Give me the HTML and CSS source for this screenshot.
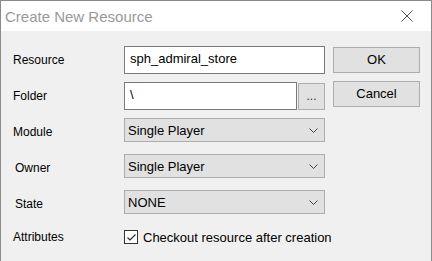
FILE: index.html
```html
<!doctype html>
<html lang="en">
<head>
    <meta charset="UTF-8">
    <title>Create New Resource</title>
    <link rel="stylesheet" href="styles.css">
</head>
<body>
<div class="window">
    <div class="titleBar">
        <span class="title">Create New Resource</span>
        <a href="javascript:;" class="closeBtn">
            <svg width="12" height="12" viewBox="0 0 12 12">
                <path d="M0.5 0.5 L11.5 11.5 M11.5 0.5 L0.5 11.5" stroke="#555" stroke-width="1" fill="none"/>
            </svg>
        </a>
    </div>
    <div class="content">
        <div class="form">
            <div class="row rowTall">
                <label>Resource</label>
                <div class="textBox">sph_admiral_store</div>
            </div>
            <div class="row rowTall gap8">
                <label>Folder</label>
                <div class="textBox short">\</div>
                <div class="dotsBtn">...</div>
            </div>
            <div class="row gap8">
                <label class="low">Module</label>
                <div class="combo">
                    <span>Single Player</span>
                    <svg width="9" height="5" viewBox="0 0 9 5"><path d="M0.5 0.5 L4.5 4.5 L8.5 0.5" stroke="#444" fill="none"/></svg>
                </div>
            </div>
            <div class="row gap12">
                <label class="low indent">Owner</label>
                <div class="combo">
                    <span>Single Player</span>
                    <svg width="9" height="5" viewBox="0 0 9 5"><path d="M0.5 0.5 L4.5 4.5 L8.5 0.5" stroke="#444" fill="none"/></svg>
                </div>
            </div>
            <div class="row gap12">
                <label class="low indent">State</label>
                <div class="combo">
                    <span>NONE</span>
                    <svg width="9" height="5" viewBox="0 0 9 5"><path d="M0.5 0.5 L4.5 4.5 L8.5 0.5" stroke="#444" fill="none"/></svg>
                </div>
            </div>
            <div class="row rowCheck">
                <label>Attributes</label>
                <div class="check">
                    <span class="box">
                        <svg width="11" height="11" viewBox="0 0 11 11"><path d="M1.5 5.5 L4 8 L9.5 2.5" stroke="#222" stroke-width="1.1" fill="none"/></svg>
                    </span>
                    <span>Checkout resource after creation</span>
                </div>
            </div>
        </div>
        <div class="buttons">
            <div class="btn">OK</div>
            <div class="btn">Cancel</div>
        </div>
    </div>
</div>
</body>
</html>
```

FILE: styles.css
```css
* {
    margin: 0;
    padding: 0;
    box-sizing: border-box;
}

body {
    font-family: "Liberation Sans", Arial, sans-serif;
    font-size: 12px;
    color: #000;
    background: #fff;
}

.window {
    width: 432px;
    height: 261px;
    border: 1px solid #8a8a8a;
    border-bottom: none;
    display: flex;
    flex-direction: column;
}

.titleBar {
    height: 30px;
    background: #fff;
    display: flex;
    align-items: center;
    justify-content: space-between;
    padding-left: 4px;
}

.titleBar .title {
    font-size: 15px;
    color: #9a9a9a;
}

.titleBar .closeBtn {
    display: flex;
    width: 46px;
    height: 30px;
    align-items: center;
    justify-content: center;
    margin-right: 1px;
}

.content {
    flex: 1;
    background: #f0f0f0;
    display: flex;
    padding: 15px 0 0 12px;
}

.form {
    width: 312px;
    flex: none;
}

.row {
    display: flex;
    align-items: center;
    height: 24px;
}

.rowTall {
    height: 28px;
}

.gap8 {
    margin-top: 8px;
}

.gap12 {
    margin-top: 12px;
}

.row label {
    width: 111px;
    flex: none;
}

.row label.low {
    padding-top: 4px;
}

.row label.indent {
    padding-left: 2px;
}

.textBox {
    width: 202px;
    height: 28px;
    border: 1px solid #7a7a7a;
    background: #fff;
    padding-left: 5px;
    line-height: 24px;
    font-size: 13px;
}

.textBox.short {
    width: 173px;
}

.dotsBtn {
    width: 27px;
    height: 27px;
    margin-left: 1px;
    border: 1px solid #adadad;
    background: #e1e1e1;
    text-align: center;
    line-height: 24px;
    color: #333;
}

.combo {
    width: 202px;
    height: 24px;
    border: 1px solid #adadad;
    background: #e1e1e1;
    display: flex;
    align-items: center;
    justify-content: space-between;
    padding: 0 6px 0 3px;
    font-size: 13px;
}

.rowCheck {
    margin-top: 14px;
    height: 18px;
}

.check {
    display: flex;
    align-items: center;
    gap: 5px;
    font-size: 13px;
    white-space: nowrap;
}

.check .box {
    width: 14px;
    height: 14px;
    flex: none;
    border: 1px solid #333;
    background: #fff;
    display: flex;
    align-items: center;
    justify-content: center;
}

.buttons {
    padding: 1px 0 0 8px;
    display: flex;
    flex-direction: column;
    gap: 8px;
}

.btn {
    width: 87px;
    height: 26px;
    border: 1px solid #adadad;
    background: #e1e1e1;
    text-align: center;
    line-height: 24px;
    font-size: 13px;
}
```
